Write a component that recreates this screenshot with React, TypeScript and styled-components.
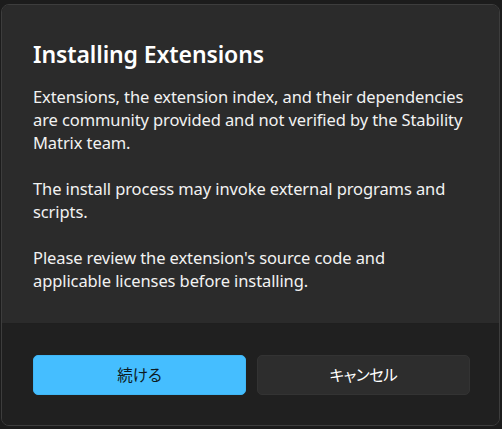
import React from "react";
import styled, { createGlobalStyle } from "styled-components";

const GlobalStyle = createGlobalStyle`
  html, body {
    margin: 0;
    padding: 0;
    background: #1c1c1c;
  }
  body {
    font-family: "Noto Sans", "Noto Sans CJK JP", sans-serif;
    color: #ffffff;
  }
`;

const Page = styled.div`
  width: 502px;
  height: 429px;
  padding: 4px 0 0 1px;
  box-sizing: border-box;
`;

const Dialog = styled.div`
  width: 499px;
  height: 422px;
  box-sizing: border-box;
  border: 1px solid #3d3d3d;
  border-radius: 8px;
  overflow: hidden;
  display: flex;
  flex-direction: column;
  background: #202020;
`;

const Content = styled.div`
  background: #2b2b2b;
  padding: 33px 30px 0 31px;
  height: 319px;
  box-sizing: border-box;
  border-bottom: 1px solid #1f1f1f;
`;

const Title = styled.h1`
  margin: 0 0 15px 0;
  font-family: "Noto Sans", sans-serif;
  font-weight: 600;
  font-size: 23px;
  line-height: 32px;
  letter-spacing: -0.1px;
  color: #ffffff;
`;

const Body = styled.p`
  margin: 0;
  font-family: "Noto Sans", sans-serif;
  font-size: 16.5px;
  line-height: 23px;
  letter-spacing: -0.1px;
  white-space: pre;
  color: #f2f2f2;
`;

const Footer = styled.div`
  flex: 1;
  display: flex;
  gap: 11px;
  padding: 31px 30px 0 31px;
  background: #202020;
`;

const Button = styled.button<{ $primary?: boolean }>`
  flex: 0 0 213px;
  height: 40px;
  box-sizing: border-box;
  border-radius: 5px;
  border: 1px solid ${(p) => (p.$primary ? "#3fb6f5" : "#333333")};
  background: ${(p) => (p.$primary ? "#45beff" : "#2d2d2d")};
  color: ${(p) => (p.$primary ? "#0c1a22" : "#ffffff")};
  font-family: "Noto Sans CJK JP", sans-serif;
  font-size: 15.5px;
  letter-spacing: ${(p) => (p.$primary ? "0" : "-0.5px")};
  font-feature-settings: "palt";
  cursor: pointer;
  padding: 0 0 2px 0;
`;

const bodyText =
  "Extensions, the extension index, and their dependencies\n" +
  "are community provided and not verified by the Stability\n" +
  "Matrix team.\n" +
  "\n" +
  "The install process may invoke external programs and\n" +
  "scripts.\n" +
  "\n" +
  "Please review the extension's source code and\n" +
  "applicable licenses before installing.";

export default function App() {
  return (
    <>
      <GlobalStyle />
      <Page>
        <Dialog>
          <Content>
            <Title>Installing Extensions</Title>
            <Body>{bodyText}</Body>
          </Content>
          <Footer>
            <Button $primary>続ける</Button>
            <Button>キャンセル</Button>
          </Footer>
        </Dialog>
      </Page>
    </>
  );
}
